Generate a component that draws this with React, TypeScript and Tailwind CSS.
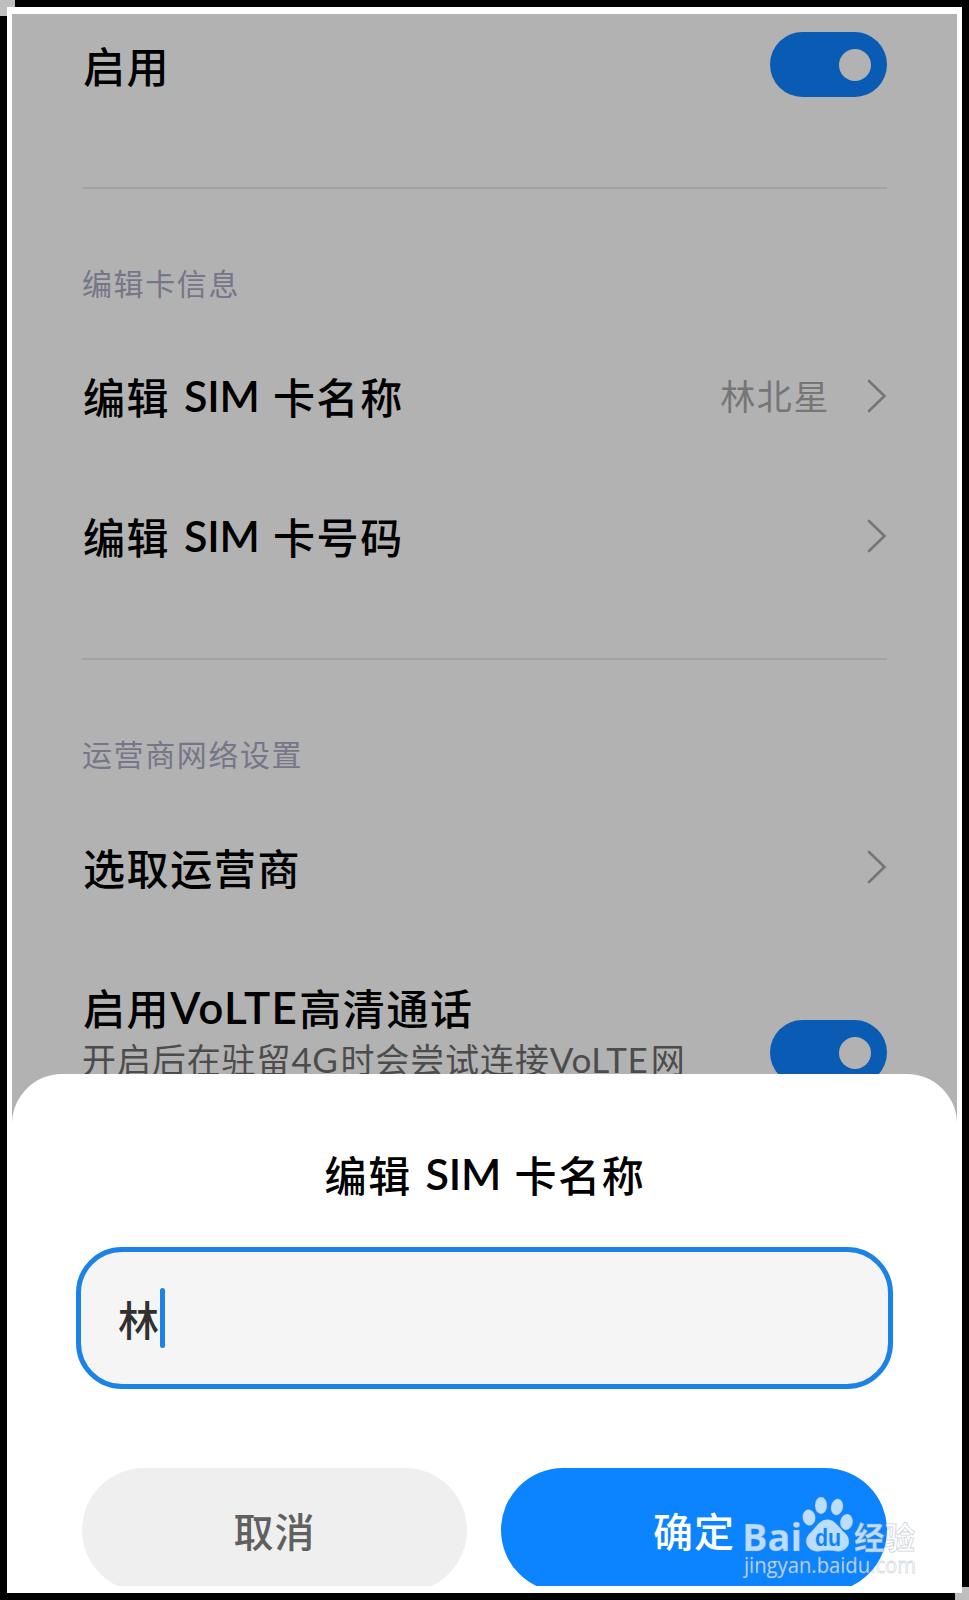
import React from 'react';

const Toggle: React.FC = () => (
  <div className="flex h-[65px] w-[117px] shrink-0 items-center justify-end rounded-full bg-[#0a5bb3] pr-4">
    <div className="size-8 rounded-full bg-[#b2b2b2]" />
  </div>
);

const Chevron: React.FC = () => (
  <svg className="mb-px h-9 w-5 shrink-0" viewBox="0 0 20 36" fill="none" stroke="#767676" strokeWidth="2.6" strokeLinecap="round">
    <path d="M2 3 L17.5 18 L2 33" />
  </svg>
);

const SectionLabel: React.FC<{ children: React.ReactNode }> = ({ children }) => (
  <div className="mt-[73px] mb-[24px] flex h-10 items-center text-[30px] leading-10 tracking-[1.6px] text-[#767688]">
    {children}
  </div>
);

const SimTitle: React.FC<{ suffix: string }> = ({ suffix }) => (
  <span className="inline-flex items-center whitespace-nowrap text-[42px] leading-[60px] font-medium tracking-[1.6px] text-black">
    <span className="w-[101px]">编辑</span>
    <span className="w-[89px] font-['Lato'] text-[43px] font-semibold tracking-[-0.2px]">SIM</span>
    <span>{suffix}</span>
  </span>
);

const Row: React.FC<{ title: React.ReactNode; value?: string }> = ({ title, value }) => (
  <div className="flex h-[140px] items-center">
    <div className="flex-1 pb-px pl-px text-[42px] leading-[60px] font-medium tracking-[1.6px] text-black">{title}</div>
    {value && <span className="mr-[37px] pb-[2px] text-[35px] tracking-[1.6px] text-[#767676]">{value}</span>}
    <Chevron />
  </div>
);

const Watermark: React.FC = () => (
  <svg
    className="absolute right-[38px] bottom-[1px] h-[96px] w-[180px]"
    viewBox="0 0 180 96"
    fill="#ffffff"
    fillOpacity="0.72"
    stroke="#8a9aaa"
    strokeOpacity="0.3"
    strokeWidth="0.8"
  >
    <text x="3" y="61.5" textLength="60" lengthAdjust="spacingAndGlyphs" fontFamily="Open Sans, sans-serif" fontWeight="700" fontSize="38">
      Bai
    </text>
    <ellipse cx="70" cy="28.5" rx="6.3" ry="8" transform="rotate(-8 70 28.5)" />
    <ellipse cx="82" cy="16.5" rx="6" ry="8.4" />
    <ellipse cx="98" cy="18" rx="6" ry="8.2" transform="rotate(12 98 18)" />
    <ellipse cx="107.5" cy="33" rx="6.2" ry="8" transform="rotate(10 107.5 33)" />
    <path d="M88.5 30.5 C96 30.5 99 38 106 44 C113.5 51 110 62 99 62.5 C92 61 86 61 79 62.5 C68 62.5 63.5 52 70.5 44.5 C77 39 80 30.5 88.5 30.5 Z" />
    <text x="76" y="57" textLength="26" lengthAdjust="spacingAndGlyphs" fontFamily="Liberation Sans" fontWeight="700" fontSize="24" fill="#0d84ff" fillOpacity="1" stroke="none">
      du
    </text>
    <text x="115" y="59.5" textLength="61" lengthAdjust="spacingAndGlyphs" fontFamily="Noto Sans CJK SC" fontWeight="700" fontSize="31" strokeOpacity="0.45">
      经验
    </text>
    <text x="5" y="83.5" textLength="172" lengthAdjust="spacingAndGlyphs" fontFamily="Open Sans, sans-serif" fontSize="21.5" strokeOpacity="0.4">
      jingyan.baidu.com
    </text>
  </svg>
);

const App: React.FC = () => {
  return (
    <div className="relative h-[1600px] w-[969px] overflow-hidden bg-black pt-[7px] pl-[7px] font-['Noto_Sans_CJK_SC',sans-serif]">
      <div className="absolute top-0 left-0 h-4 w-[15px] bg-[#bebebe]" />
      <div className="absolute right-0 bottom-0 h-[13px] w-[14px] bg-[#bebebe]" />

      <div className="relative h-[1586px] w-[955px] border-x-[5px] border-t-[7px] border-b-[7px] border-white bg-[#b2b2b2]">
        <div className="relative h-[1572px] overflow-hidden">
          {/* Settings list */}
          <div className="px-[70px]">
            <div className="flex h-[101px] items-center justify-between">
              <span className="pl-px text-[42px] leading-[60px] font-medium tracking-[1.6px] text-black">启用</span>
              <Toggle />
            </div>
            <div className="mt-[72px] h-[2px] bg-[#a3a3a3]" />

            <SectionLabel>编辑卡信息</SectionLabel>
            <Row title={<SimTitle suffix="卡名称" />} value="林北星" />
            <Row title={<SimTitle suffix="卡号码" />} />
            <div className="mt-[52px] h-[2px] bg-[#a3a3a3]" />

            <SectionLabel>运营商网络设置</SectionLabel>
            <Row title="选取运营商" />
            <div className="flex justify-between pt-[41px]">
              <div className="whitespace-nowrap">
                <div className="flex h-[58px] items-center pl-px text-[42px] leading-[60px] font-medium tracking-[1.6px] text-black">
                  启用
                  <span className="w-[129px] font-['Lato'] text-[44px] font-semibold tracking-[1.3px]">VoLTE</span>
                  高清通话
                </div>
                <div className="flex h-[46px] items-center text-[34px] leading-[46px] tracking-[0.9px] text-[#4c4c4c]">
                  开启后在驻留
                  <span className="w-[49px] font-['Lato'] text-[35px] tracking-[0.5px]">4G</span>
                  时会尝试连接
                  <span className="w-[101px] font-['Lato'] text-[35px] tracking-[0.5px]">VoLTE</span>网
                </div>
              </div>
              <div className="pt-[42px]">
                <Toggle />
              </div>
            </div>
          </div>

          {/* Bottom sheet */}
          <div className="absolute inset-x-0 bottom-0 h-[512px] rounded-t-[50px] bg-white px-16 pt-[70px]">
            <div className="flex justify-center pl-px">
              <SimTitle suffix="卡名称" />
            </div>
            <div className="mt-[43px] flex h-[142px] items-center rounded-[46px] border-[5px] border-[#1b82e6] bg-[#f5f5f5] pl-[37px]">
              <span className="text-[41px] leading-[60px] font-medium text-[#303030]">林</span>
              <span className="ml-px h-[60px] w-[5px] rounded-sm bg-[#1b82e6]" />
            </div>
            <div className="mt-[79px] flex justify-between px-[6px] text-[40px] font-medium tracking-[1px]">
              <button className="h-[124px] w-[385px] rounded-full bg-[#efefef] pb-px text-[#606060]">取消</button>
              <button className="h-[124px] w-[386px] rounded-full bg-[#0d84ff] pb-px text-white">确定</button>
            </div>
          </div>
        </div>
        <Watermark />
      </div>
    </div>
  );
};

export default App;
